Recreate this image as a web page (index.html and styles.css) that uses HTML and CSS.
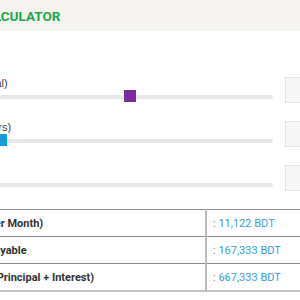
FILE: index.html
```html
<!DOCTYPE html>
<html lang="en">
<head>
  <meta charset="UTF-8">
  <meta name="viewport" content="width=device-width, initial-scale=1.0">
  <title>EMI Calculator</title>
  <link rel="stylesheet" href="styles.css">
</head>
<body>
  <div class="page">
    <div class="header">
      <h1>LOAN CALCULATOR</h1>
    </div>

    <div class="calc">
      <div class="field">
        <div class="field-main">
          <label>Interest Rate (Annual)</label>
          <div class="track">
            <div class="knob rate" style="left: 60%;"></div>
          </div>
        </div>
        <div class="field-box"></div>
      </div>

      <div class="field">
        <div class="field-main">
          <label>Loan Tenure (In Years)</label>
          <div class="track">
            <div class="knob tenure" style="left: 25.5%;"></div>
          </div>
        </div>
        <div class="field-box"></div>
      </div>

      <div class="field">
        <div class="field-main">
          <label>Amount</label>
          <div class="track">
            <div class="knob amount" style="left: 0%;"></div>
          </div>
        </div>
        <div class="field-box"></div>
      </div>
    </div>

    <table class="result">
      <tr>
        <td class="result-label">Monthly EMI (Per Month)</td>
        <td class="result-value"><span class="colon">:</span> 11,122 BDT</td>
      </tr>
      <tr>
        <td class="result-label">Total Interest Payable</td>
        <td class="result-value"><span class="colon">:</span> 167,333 BDT</td>
      </tr>
      <tr>
        <td class="result-label">Total Payment (Principal + Interest)</td>
        <td class="result-value"><span class="colon">:</span> 667,333 BDT</td>
      </tr>
    </table>
  </div>
</body>
</html>
```

FILE: styles.css
```css
body {
  margin: 0;
  overflow: hidden;
  background-color: #ffffff;
  font-family: Roboto, "Liberation Sans", sans-serif;
}

.page {
  margin-left: -100px;
  width: 445px;
}

/* title band */
.header {
  height: 31px;
  width: 520px;
  background-color: #f6f4f1;
  display: flex;
  align-items: center;
}

.header h1 {
  margin: 0 0 0 38px;
  font-size: 13.5px;
  font-weight: 700;
  color: #1ea84b;
  white-space: nowrap;
}

/* slider rows */
.calc {
  padding-top: 46px;
  display: flex;
  flex-direction: column;
  gap: 18px;
}

.field {
  display: flex;
  align-items: stretch;
}

.field-main {
  flex: 1;
  display: flex;
  flex-direction: column;
  justify-content: space-between;
}

.field-main label {
  font-family: "Liberation Sans", Arial, sans-serif;
  font-size: 11px;
  color: #444444;
}

.track {
  position: relative;
  height: 4px;
  margin-bottom: 4px;
  background-color: #e8e8e8;
  border-radius: 2px;
}

.knob {
  position: absolute;
  top: -5px;
  width: 12px;
  height: 12px;
}

.knob.rate {
  background-color: #7b2d9f;
}

.knob.tenure {
  background-color: #1b9ad6;
}

.knob.amount {
  background-color: #e07b1a;
}

.field-box {
  width: 58px;
  height: 24px;
  margin-left: 12px;
  background-color: #f7f7f7;
  border: 1px solid #e3e3e3;
}

/* results table */
.result {
  margin-top: 18px;
  width: 540px;
  border-collapse: collapse;
  border-bottom: 2px solid #c4c4c4;
}

.result td {
  height: 26px;
  border-top: 1px solid #8a8a8a;
  font-size: 11px;
  padding: 0;
}

.result-label {
  width: 286px;
  padding-left: 19px !important;
  font-weight: 700;
  color: #333333;
}

.result-value {
  border-left: 2px solid #bcbcbc;
  padding-left: 6px !important;
  color: #3a9dd9;
}

.colon {
  color: #8b7d70;
}
```
